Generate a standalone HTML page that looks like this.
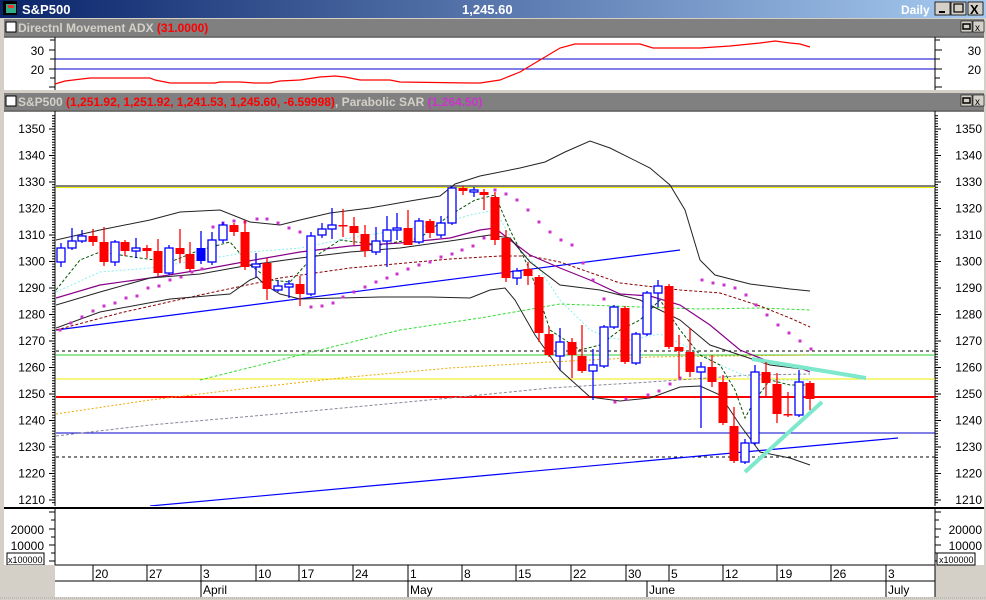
<!DOCTYPE html>
<html><head><meta charset="utf-8"><style>
html,body{margin:0;padding:0;background:#d4d0c8;}
svg{display:block;font-family:"Liberation Sans",sans-serif;}
</style></head><body>
<svg id="s" width="986" height="600" viewBox="0 0 986 600" xmlns="http://www.w3.org/2000/svg">
<defs>
<linearGradient id="tb" x1="0" x2="1" y1="0" y2="0"><stop offset="0" stop-color="#0a246a"/><stop offset="1" stop-color="#a6caf0"/></linearGradient>
</defs>
<rect width="986" height="600" fill="#d4d0c8"/>
<!-- app title bar -->
<rect x="0" y="0" width="986" height="18" fill="url(#tb)"/>
<rect x="3" y="1" width="14" height="14" fill="#000"/><rect x="6" y="4" width="10" height="9" fill="#3a8"/><rect x="8" y="5" width="6" height="3" fill="#e33"/>
<text x="22" y="14" font-size="13" font-weight="bold" fill="#fff">S&amp;P500</text>
<text x="462" y="14" font-size="13" font-weight="bold" fill="#fff">1,245.60</text>
<text x="901" y="14" font-size="12" font-weight="bold" fill="#fff">Daily</text>
<g stroke="#000" stroke-width="0.8">
<rect x="935" y="2" width="15" height="13" fill="#d4d0c8"/><rect x="951" y="2" width="15" height="13" fill="#d4d0c8"/><rect x="968" y="2" width="15" height="13" fill="#d4d0c8"/>
</g>
<rect x="939" y="11" width="6" height="2" fill="#000"/>
<rect x="954" y="4" width="9" height="8" fill="none" stroke="#000" stroke-width="1.2"/>
<text x="970" y="14" font-size="13" font-weight="bold">X</text>

<!-- ADX panel -->
<rect x="4" y="19" width="980" height="17" fill="#808080"/>
<rect x="6" y="22" width="10" height="10" fill="#fff" stroke="#000"/>
<text x="18" y="32" font-size="12" font-weight="bold" fill="#d4d0c8">Directnl Movement ADX <tspan fill="#f00">(31.0000)</tspan></text>
<rect x="961" y="21" width="11" height="11" fill="#d4d0c8" stroke="#000" stroke-width="0.6"/><rect x="963" y="24" width="7" height="5" fill="none" stroke="#000" stroke-width="1.5"/>
<rect x="973" y="21" width="11" height="11" fill="#d4d0c8" stroke="#000" stroke-width="0.6"/><text x="975" y="31" font-size="10">x</text>
<rect x="4" y="37" width="980" height="53" fill="#fff"/>
<line x1="4" y1="37" x2="984" y2="37" stroke="#000"/>
<line x1="55" y1="37" x2="55" y2="90" stroke="#000"/><line x1="935" y1="37" x2="935" y2="90" stroke="#000"/>
<line x1="55" y1="59" x2="935" y2="59" stroke="#00c"/><line x1="55" y1="69" x2="935" y2="69" stroke="#00c"/>
<g stroke="#000"><line x1="50" y1="40" x2="55" y2="40"/><line x1="49" y1="50" x2="55" y2="50"/><line x1="50" y1="59" x2="55" y2="59"/><line x1="49" y1="69" x2="55" y2="69"/><line x1="50" y1="78" x2="55" y2="78"/><line x1="49" y1="87" x2="55" y2="87"/>
<line x1="935" y1="40" x2="940" y2="40"/><line x1="935" y1="50" x2="942" y2="50"/><line x1="935" y1="59" x2="940" y2="59"/><line x1="935" y1="69" x2="942" y2="69"/><line x1="935" y1="78" x2="940" y2="78"/><line x1="935" y1="87" x2="942" y2="87"/></g>
<g font-size="12"><text x="44" y="55" text-anchor="end">30</text><text x="44" y="74" text-anchor="end">20</text><text x="981" y="55" text-anchor="end">30</text><text x="981" y="74" text-anchor="end">20</text></g>
<polyline fill="none" stroke="#f00" stroke-width="1.2" points="55,84 65,81 90,78 150,78 155,80 170,83 215,83 220,82 240,82 255,83 270,83 280,81 300,80 320,77 335,76 345,77 360,80 390,80 400,82 470,83 480,83 500,80 520,72 540,60 560,48 575,44 610,44 640,44 653,48 700,48 730,46 760,43 775,41 790,43 800,44 810,47"/>

<!-- main panel -->
<rect x="4" y="93" width="980" height="17" fill="#808080"/>
<rect x="6" y="96" width="10" height="10" fill="#fff" stroke="#000"/>
<text x="18" y="106" font-size="12" font-weight="bold" fill="#d4d0c8">S&amp;P500 <tspan fill="#f00">(1,251.92, 1,251.92, 1,241.53, 1,245.60, -6.59998)</tspan>, Parabolic SAR <tspan fill="#c3c">(1,264.50)</tspan></text>
<rect x="961" y="95" width="11" height="11" fill="#d4d0c8" stroke="#000" stroke-width="0.6"/><rect x="963" y="98" width="7" height="5" fill="none" stroke="#000" stroke-width="1.5"/>
<rect x="973" y="95" width="11" height="11" fill="#d4d0c8" stroke="#000" stroke-width="0.6"/><text x="975" y="105" font-size="10">x</text>
<rect x="4" y="111" width="980" height="395" fill="#fff"/>
<line x1="4" y1="111" x2="984" y2="111" stroke="#000"/>
<line x1="55" y1="111" x2="55" y2="506" stroke="#000"/><line x1="935" y1="111" x2="935" y2="506" stroke="#000"/>
<g id="ticks" stroke="#000"></g>
<g id="plabels" font-size="12"></g>

<g clip-path="url(#cp)">
<clipPath id="cp"><rect x="56" y="112" width="879" height="394"/></clipPath>
<!-- horizontal lines -->
<line x1="56" y1="186" x2="935" y2="186" stroke="#000"/>
<line x1="56" y1="187.5" x2="935" y2="187.5" stroke="#ee0"/>
<line x1="56" y1="351" x2="935" y2="351" stroke="#000" stroke-dasharray="3,3"/>
<line x1="56" y1="355" x2="935" y2="355" stroke="#3c3"/>
<line x1="56" y1="379" x2="935" y2="379" stroke="#ee0"/>
<line x1="56" y1="397" x2="935" y2="397" stroke="#f00" stroke-width="2"/>
<line x1="56" y1="433" x2="935" y2="433" stroke="#00c"/>
<line x1="56" y1="457" x2="935" y2="457" stroke="#000" stroke-dasharray="3,3"/>
<!-- trend lines -->
<line x1="56" y1="330" x2="680" y2="250" stroke="#00f" stroke-width="1.2"/>
<line x1="150" y1="506" x2="898" y2="438" stroke="#00f" stroke-width="1.2"/>
<!-- MAs -->
<polyline fill="none" stroke="#ea0" stroke-width="1" stroke-dasharray="2,2" points="56,414 150,400 250,388 350,377 450,368 550,362 650,357 810,355"/>
<polyline fill="none" stroke="#889" stroke-width="1" stroke-dasharray="3,2" points="56,436 150,425 300,412 450,398 550,388 650,382 750,375 810,374"/>
<polyline fill="none" stroke="#3d3" stroke-width="1" stroke-dasharray="3,2" points="200,380 300,355 400,330 480,318 560,304 640,307 700,309 760,308 810,310"/>
<polyline fill="none" stroke="#800" stroke-width="1" stroke-dasharray="3,2" points="56,330 120,313 200,295 280,278 350,268 450,259 500,256 530,256 560,262 620,283 680,290 720,293 760,306 790,318 810,327"/>
<polyline fill="none" stroke="#8ee" stroke-width="1" stroke-dasharray="2,2" points="56,292 100,272 150,268 200,260 250,252 300,248 350,238 400,230 440,224 470,215 495,210 515,245 540,270 560,300 590,330 610,338 630,340 660,334 690,348 720,365 750,378 780,380 810,380"/>
<polyline fill="none" stroke="#050" stroke-width="1" stroke-dasharray="3,2" points="56,290 80,260 100,252 120,255 140,258 170,262 200,250 230,242 250,265 270,280 290,282 310,260 340,240 380,245 420,238 450,215 475,200 495,195 510,230 530,270 550,330 580,350 600,345 620,330 640,320 660,300 680,330 700,355 720,365 735,390 745,418 755,400 770,380 790,385 810,385"/>
<polyline fill="none" stroke="#808" stroke-width="1.2" points="56,298 100,285 150,278 200,270 260,259 300,252 350,246 400,243 450,238 480,230 495,228 510,240 530,255 560,268 590,280 620,294 650,296 680,305 710,325 740,350 770,362 800,368 810,372"/>
<polyline fill="none" stroke="#222" stroke-width="1" points="56,305 100,292 150,278 200,274 250,265 300,258 350,252 400,248 450,241 490,235 510,238 530,262 560,285 600,290 640,300 680,320 710,345 740,355 770,365 810,370"/>
<polyline fill="none" stroke="#222" stroke-width="1" points="56,240 100,230 150,220 180,212 220,210 250,222 280,225 300,220 330,213 370,208 410,201 440,196 455,184 480,176 520,168 545,162 565,152 590,141 610,148 650,168 670,185 685,210 700,260 715,275 750,284 790,289 810,291"/>
<polyline fill="none" stroke="#222" stroke-width="1" points="56,328 100,312 170,299 230,294 250,280 257,277 265,285 280,294 300,299 340,298 380,297 430,297 470,298 490,290 505,288 515,300 535,335 560,370 590,397 620,401 650,398 680,387 700,386 720,395 740,425 760,452 790,458 810,465"/>
<!-- cyan thick -->
<line x1="752" y1="359" x2="866" y2="378" stroke="#7ee8cc" stroke-width="4"/>
<line x1="745" y1="472" x2="822" y2="402" stroke="#7ee8cc" stroke-width="4"/>
<g id="sar" fill="#c3c"></g>
<g id="candles"></g>
</g>

<!-- volume pane -->
<rect x="4" y="506" width="980" height="3" fill="#fff"/>
<line x1="4" y1="508" x2="984" y2="508" stroke="#000" stroke-width="2"/>
<rect x="4" y="509" width="980" height="56" fill="#fff"/>
<line x1="55" y1="509" x2="55" y2="597" stroke="#000"/><line x1="935" y1="509" x2="935" y2="565" stroke="#000"/>
<g stroke="#000"><line x1="49" y1="512" x2="55" y2="512"/><line x1="49" y1="529" x2="55" y2="529"/><line x1="49" y1="545" x2="55" y2="545"/><line x1="49" y1="561" x2="55" y2="561"/><line x1="51" y1="520" x2="55" y2="520"/><line x1="51" y1="537" x2="55" y2="537"/><line x1="51" y1="553" x2="55" y2="553"/>
<line x1="935" y1="512" x2="941" y2="512"/><line x1="935" y1="529" x2="941" y2="529"/><line x1="935" y1="545" x2="941" y2="545"/><line x1="935" y1="561" x2="941" y2="561"/><line x1="935" y1="520" x2="939" y2="520"/><line x1="935" y1="537" x2="939" y2="537"/><line x1="935" y1="553" x2="939" y2="553"/></g>
<g font-size="12"><text x="44" y="534" text-anchor="end">20000</text><text x="44" y="550" text-anchor="end">10000</text><text x="982" y="534" text-anchor="end">20000</text><text x="982" y="550" text-anchor="end">10000</text></g>
<rect x="7" y="553" width="37" height="12" fill="#fff" stroke="#000"/><text x="8" y="563" font-size="9">x100000</text>
<rect x="937" y="553" width="38" height="12" fill="#fff" stroke="#000"/><text x="939" y="563" font-size="9">x100000</text>
<!-- date axis -->
<rect x="4" y="565" width="51" height="32" fill="#d4d0c8"/>
<rect x="55" y="565" width="880" height="32" fill="#fff"/>
<line x1="55" y1="565" x2="935" y2="565" stroke="#000"/><line x1="55" y1="581" x2="935" y2="581" stroke="#000"/>
<line x1="935" y1="565" x2="935" y2="597" stroke="#000"/>
<g id="dates" font-size="12"></g>
<line x1="0" y1="598" x2="986" y2="598" stroke="#aaa" stroke-dasharray="1,1"/>
</svg>
<script>
var NS="http://www.w3.org/2000/svg";
function el(p,t,a,txt){var e=document.createElementNS(NS,t);for(var k in a)e.setAttribute(k,a[k]);if(txt)e.textContent=txt;document.getElementById(p).appendChild(e);return e;}
// ticks
var y0=129,pp=2.65;
for(var p=1355;p>=1207;p--){var y=y0+(1350-p)*pp;if(y<113||y>504)continue;var L=(p%10==0)?6:3;
el("ticks","line",{x1:55-L,y1:y,x2:55,y2:y});el("ticks","line",{x1:935,y1:y,x2:935+L,y2:y});}
for(var p=1350;p>=1210;p-=10){var y=y0+(1350-p)*pp+4;el("plabels","text",{x:45,y:y,"text-anchor":"end"},""+p);el("plabels","text",{x:982,y:y,"text-anchor":"end"},""+p);}
// candles [x, bodyTop, bodyBot, wickTop, wickBot, type]
var C=[[61,248,262,243,267,'b'],[72,241,248,228,250,'b'],[82,236,241,230,243,'b'],[93,236,242,229,246,'r'],[104,242,262,227,266,'r'],[115,242,262,240,266,'b'],[125,242,251,240,256,'r'],[136,248,251,238,258,'b'],[147,248,251,245,258,'r'],[158,251,273,239,276,'r'],[169,248,273,245,275,'b'],[180,248,254,229,263,'r'],[190,254,269,242,271,'r'],[201,248,261,231,264,'B'],[212,240,262,232,265,'b'],[223,225,240,222,243,'b'],[234,225,232,223,236,'r'],[245,232,267,220,270,'r'],[256,264,267,253,277,'b'],[267,263,289,258,300,'r'],[278,286,290,280,292,'b'],[289,284,287,280,298,'b'],[300,284,294,276,306,'r'],[311,236,294,232,296,'b'],[322,229,235,223,238,'b'],[332,225,229,208,239,'b'],[343,225,226,209,237,'r'],[354,226,233,217,245,'r'],[365,234,251,225,257,'r'],[376,241,252,227,255,'b'],[387,230,241,216,267,'b'],[397,228,230,213,240,'b'],[408,228,245,210,245,'r'],[419,221,242,218,244,'b'],[430,221,233,219,238,'r'],[441,223,235,216,238,'b'],[452,188,223,186,225,'b'],[463,188,191,186,195,'r'],[474,190,192,187,197,'b'],[484,192,195,189,210,'r'],[495,197,240,192,245,'r'],[506,238,278,230,282,'r'],[517,271,278,268,285,'b'],[528,269,276,262,285,'r'],[539,277,333,275,342,'r'],[549,334,355,327,357,'r'],[560,342,356,328,370,'b'],[572,342,355,338,378,'r'],[582,356,371,325,373,'r'],[593,365,371,349,400,'b'],[604,327,366,325,368,'b'],[614,307,327,305,329,'b'],[625,308,362,306,364,'r'],[636,334,363,332,365,'b'],[647,293,334,291,336,'b'],[658,286,293,280,307,'b'],[669,286,347,284,349,'r'],[679,347,351,335,378,'r'],[690,352,372,328,377,'r'],[701,367,372,362,428,'b'],[712,367,382,355,387,'r'],[723,382,423,375,425,'r'],[734,426,461,407,463,'r'],[745,443,462,439,464,'b'],[755,372,443,365,445,'b'],[766,372,383,362,397,'r'],[777,384,414,373,423,'r'],[788,414,415,392,417,'r'],[799,382,415,370,417,'b'],[810,383,399,381,410,'r']];
C.forEach(function(c){var col=c[5]=='r'?'#f00':'#00f';
el("candles","line",{x1:c[0],y1:c[3],x2:c[0],y2:c[4],stroke:col,"stroke-width":1.3});
var h=Math.max(c[2]-c[1],1.5);
if(c[5]=='b')el("candles","rect",{x:c[0]-4,y:c[1],width:8,height:h,fill:'#fff',stroke:col,"stroke-width":1.3});
else el("candles","rect",{x:c[0]-4.5,y:c[1],width:9,height:h,fill:col});});
// SAR dots
var S=[[60,330],[71,323],[82,317],[93,311],[104,306],[115,303],[126,298],[137,296],[148,288],[159,286],[170,280],[181,277],[192,272],[202,269],[213,227],[223,223],[234,221],[245,222],[257,219],[267,219],[278,223],[289,228],[300,232],[311,307],[322,306],[333,303],[343,297],[354,292],[365,287],[376,282],[387,278],[397,274],[408,269],[419,265],[430,262],[441,257],[452,254],[462,250],[473,246],[484,238],[495,190],[506,194],[517,200],[528,210],[539,222],[550,232],[561,240],[572,245],[583,263],[593,280],[604,299],[615,402],[626,399],[648,395],[659,391],[670,384],[680,378],[702,280],[713,283],[724,285],[735,288],[746,295],[756,305],[767,315],[778,325],[789,333],[800,341],[811,349]];
S.forEach(function(d){el("sar","rect",{x:d[0]-1.5,y:d[1]-1.5,width:3,height:3});});
// dates
var D=[[93,"20"],[147,"27"],[201,"3"],[256,"10"],[299,"17"],[353,"24"],[408,"1"],[462,"8"],[516,"15"],[571,"22"],[626,"30"],[669,"5"],[723,"12"],[777,"19"],[831,"26"],[886,"3"]];
D.forEach(function(d){el("dates","line",{x1:d[0],y1:565,x2:d[0],y2:581,stroke:"#000"});el("dates","text",{x:d[0]+2,y:578},d[1]);});
[[201,"April"],[408,"May"],[647,"June"],[886,"July"]].forEach(function(d){el("dates","line",{x1:d[0],y1:581,x2:d[0],y2:597,stroke:"#000"});el("dates","text",{x:d[0]+2,y:594},d[1]);});
</script>
</body></html>
